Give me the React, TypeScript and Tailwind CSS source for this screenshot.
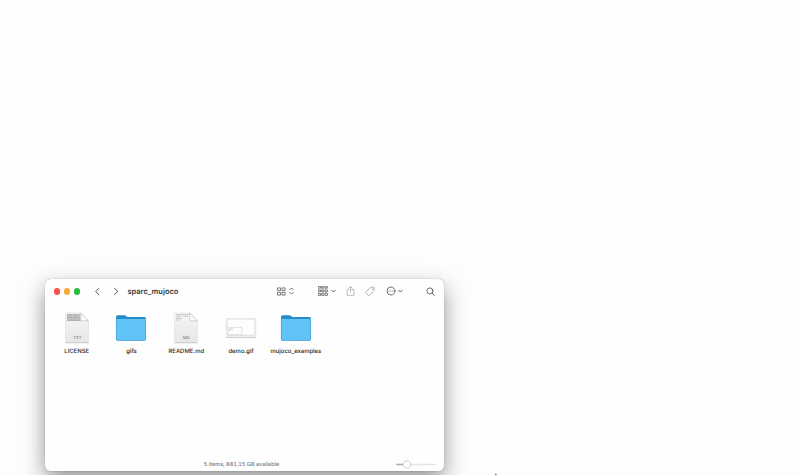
import type { ReactNode } from "react";

function Icon({ w, h, className = "", children }: { w: number; h: number; className?: string; children: ReactNode }) {
  return (
    <svg
      width={w}
      height={h}
      viewBox={`0 0 ${w} ${h}`}
      fill="none"
      stroke="currentColor"
      strokeWidth="0.9"
      strokeLinecap="round"
      strokeLinejoin="round"
      className={`block shrink-0 ${className}`}
    >
      {children}
    </svg>
  );
}

function Toolbar() {
  return (
    <header className="flex h-[25px] shrink-0 items-center pl-[9.4px] text-[#606060]">
      <div className="flex gap-[3.6px]">
        <span className="size-[6.4px] rounded-full bg-[#f4524a]" />
        <span className="size-[6.4px] rounded-full bg-[#f5ab3b]" />
        <span className="size-[6.4px] rounded-full bg-[#27bd3c]" />
      </div>
      <Icon w={6} h={8} className="ml-[14px] text-[#484848]">
        <path d="M4.9 .4 1.6 3.500l3.300 3.100" />
      </Icon>
      <Icon w={6} h={8} className="ml-[12.500px] text-[#484848]">
        <path d="M1.500 .4 4.800 3.500 1.500 6.600" />
      </Icon>
      <h1 className="ml-[8.700px] w-[149.600px] whitespace-nowrap text-[7.500px] leading-none font-semibold text-[#3c3c3c]">sparc_mujoco</h1>
      <Icon w={9} h={9} className="-mt-px">
        <path strokeWidth="0.8" d="M.9.9h2.700v2.700H.9zM5.400.9h2.700v2.700H5.400zM.9 5.400h2.700v2.700H.9zM5.400 5.400h2.700v2.700H5.400z" />
      </Icon>
      <Icon w={5} h={8} className="-mt-px ml-[3px]">
        <path d="M.8 2.600 2.500.9l1.700 1.700M.8 5.400 2.500 7.100l1.700-1.700" />
      </Icon>
      <Icon w={10} h={10} className="-mt-px ml-[23.500px]">
        <path
          strokeWidth="0.8"
          d="M.6.6h2v1.600h-2zM4 .6h2v1.600H4zM7.400.6h2v1.600h-2zM.6 3.900h2v1.900h-2zM4 3.900h2v1.900H4zM7.400 3.900h2v1.900h-2zM.6 7.400h2v2h-2zM4 7.400h2v2H4zM7.400 7.400h2v2h-2z"
        />
      </Icon>
      <Icon w={5} h={4} className="-mt-px ml-[3px]">
        <path strokeWidth="1" d="M.8 1.300 2.500 3l1.700-1.700" />
      </Icon>
      <Icon w={9} h={10} className="-mt-px ml-[10px] text-[#b4b4b4]">
        <path d="M3 3.500H1v5.800h7V3.500H6M4.500 6V.7M2.900 2.100 4.500.6l1.600 1.500" />
      </Icon>
      <Icon w={10} h={11} className="-mt-px ml-[10px] text-[#adadad]">
        <path d="M5.700 1.500 8.500 1.100q.8 0 .8.800l-.4 2.700-4.400 4.900q-.5.500-1 0L1 7.100q-.4-.5 0-1z" />
        <circle cx="7.500" cy="3" r=".25" />
      </Icon>
      <Icon w={10} h={10} className="-mt-px ml-[11px]">
        <circle cx="5" cy="5" r="4" />
        <path strokeWidth="1.100" d="M3.100 5h.01M5 5h.01M6.900 5h.01" />
      </Icon>
      <Icon w={5} h={4} className="-mt-px ml-[2.500px]">
        <path strokeWidth="1" d="M.8 1.300 2.500 3l1.700-1.700" />
      </Icon>
      <Icon w={9} h={9} className="-mt-px ml-[22.500px]">
        <circle cx="3.900" cy="3.900" r="3" />
        <path strokeWidth="1" d="m6.200 6.200 2.100 2.100" />
      </Icon>
    </header>
  );
}

function Folder() {
  return (
    <svg width="32" height="28" viewBox="0 0 32 28" className="block">
      <path d="M1 3q0-1.800 1.800-1.800h6.500q1 0 1.800.7l1.200 1.200h17q1.700 0 1.700 1.800V9H1z" fill="#258bc9" />
      <path d="M1 6q0-1 1-1h28q1 0 1 1v19.200q0 1.600-1.600 1.600H2.600Q1 26.800 1 25.200z" fill="#62c3f7" />
      <path d="M1.400 6.500v18.500q0 1.400 1.400 1.400h26.400q1.400 0 1.400-1.400V6.500" fill="none" stroke="#3e93c4" strokeWidth=".8" strokeDasharray="2 .8" />
    </svg>
  );
}

function Document({ kind }: { kind: "TXT" | "MD" }) {
  const dense = kind === "TXT";
  return (
    <svg width="26" height="32" viewBox="0 0 26 32" className="block shrink-0">
      <defs>
        <linearGradient id={`paper-${kind}`} x1="0" y1="0" x2="0" y2="1">
          <stop offset="0" stopColor="#f6f6f6" />
          <stop offset="1" stopColor="#e6e6e6" />
        </linearGradient>
      </defs>
      <path d="M1.500.9h15.200l7.800 8v21.200q0 1-1 1h-21q-1 0-1-1z" fill={`url(#paper-${kind})`} stroke="#dedede" strokeWidth=".6" />
      <path d="M2 30.500h22" stroke="#c6c6c6" strokeWidth=".8" />
      {dense ? (
        <>
          <path d="M3 2h13v2.500l1.500 4.500H3z" fill="#cfcfcf" />
          <path
            d="M3 2.500h12.500M3 4h12.500M3 5.500h12.500M3 7h13.500M3 8.500h14"
            fill="none"
            stroke="#999"
            strokeWidth=".6"
            strokeDasharray="5 .4"
          />
        </>
      ) : (
        <path d="M3 2.600h12.500M3 4.300h5M10 4.300h5M3 6.500h6M3 8h3" fill="none" stroke="#bdbdbd" strokeWidth=".8" />
      )}
      <path d="M16.700.9v7q0 1 1 1h6.800z" fill="#fafafa" stroke="#bdbdbd" strokeWidth=".7" />
      <text x="13.300" y="27.300" textAnchor="middle" fontSize="4.300" letterSpacing=".1" fill="#6c6c6c">
        {kind}
      </text>
    </svg>
  );
}

function GifPreview() {
  return (
    <svg width="32" height="22" viewBox="0 0 32 22" fill="none" className="block">
      <path d="M1 1.500h30v18.700H1z" fill="#fafafa" stroke="#ececec" strokeWidth=".6" />
      <path d="M2 2h28v16.200H2z" fill="#fefefe" stroke="#d0d0d0" strokeWidth=".7" />
      <path d="M1 20.300h30" stroke="#c6c6c6" strokeWidth="1" />
      <path d="M3 10.500h14v7.200H3z" stroke="#c4c4c4" strokeWidth=".6" strokeDasharray="1.500 .5" />
      <path d="M4 12h4M4 13.300h1.500" stroke="#b5b5b5" strokeWidth=".7" />
    </svg>
  );
}

function FileItem({ name, children }: { name: string; children: ReactNode }) {
  return (
    <div className="flex w-[54.8px] shrink-0 flex-col items-center">
      <div className="flex h-[32px] items-center">{children}</div>
      <span className="mt-[4px] whitespace-nowrap text-[5.950px] leading-[8px] font-medium text-[#262626]">{name}</span>
    </div>
  );
}

export default function App() {
  return (
    <main className="flex h-[475px] w-[800px] items-start overflow-hidden bg-[#fdfdfd] pt-[279px] pl-[44.5px] font-['Inter',sans-serif] [text-rendering:geometricPrecision]">
      <section className="flex h-[192px] w-[399.5px] shrink-0 flex-col rounded-[5.5px] bg-[#fefefe] shadow-[0_0_1px_rgba(0,0,0,0.45),0_9px_22px_rgba(0,0,0,0.42)]">
        <Toolbar />
        <div className="flex flex-1 pt-[7.5px] pl-[4.8px]">
          <FileItem name="LICENSE">
            <Document kind="TXT" />
          </FileItem>
          <FileItem name="gifs">
            <Folder />
          </FileItem>
          <FileItem name="README.md">
            <Document kind="MD" />
          </FileItem>
          <FileItem name="demo.gif">
            <GifPreview />
          </FileItem>
          <FileItem name="mujoco_examples">
            <Folder />
          </FileItem>
        </div>
        <footer className="flex h-[14px] shrink-0 items-center pl-[159.3px]">
          <span className="w-[192px] whitespace-nowrap pt-[3px] text-[5.5px] leading-none font-medium text-[#7a7a7a] tabular-nums">5 items, 881,15 GB available</span>
          <Icon w={41} h={9}>
            <path d="M1 4.500h38.500" stroke="#e4e4e4" strokeWidth="1.600" />
            <path d="M1 4.500h8" stroke="#ababab" strokeWidth="1.600" />
            <circle cx="11" cy="4.500" r="3.700" fill="#fff" stroke="#c8c8c8" strokeWidth=".8" />
          </Icon>
        </footer>
      </section>
      <svg width="4" height="3" viewBox="0 0 4 3" className="mt-[194px] ml-[51px] block shrink-0">
        <path d="M.3.600 3.200 3H.3z" fill="#222" />
      </svg>
    </main>
  );
}
